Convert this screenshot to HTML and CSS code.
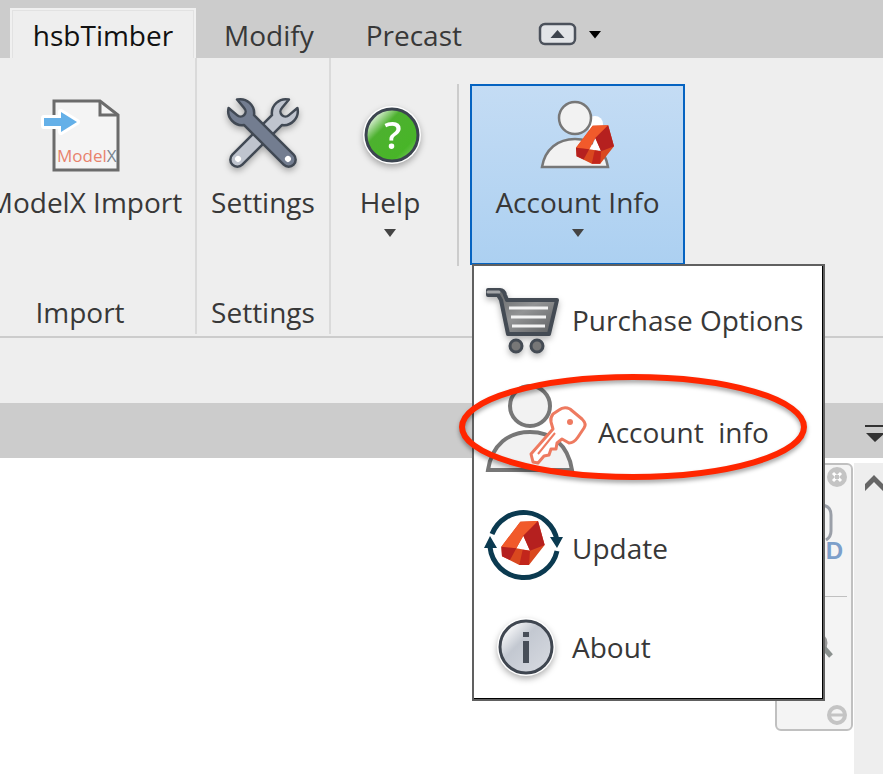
FILE: index.html
```
<!DOCTYPE html>
<html lang="en">
<head>
    <meta charset="UTF-8">
    <meta name="viewport" content="width=device-width, initial-scale=1.0">
    <title>hsbTimber</title>
    <link rel="stylesheet" href="styles.css">
</head>
<body>
    <!-- shared shapes -->
    <svg class="defs" aria-hidden="true">
        <defs>
            <linearGradient id="steel" x1="0" y1="0" x2="1" y2="1">
                <stop offset="0.1" stop-color="#ffffff"/>
                <stop offset="0.4" stop-color="#c3c8d1"/>
                <stop offset="1" stop-color="#d9dce2"/>
            </linearGradient>
            <linearGradient id="green" x1="0" y1="0" x2="1" y2="1">
                <stop offset="0.1" stop-color="#ffffff"/>
                <stop offset="0.35" stop-color="#4db12f"/>
                <stop offset="0.75" stop-color="#48b528"/>
                <stop offset="1" stop-color="#8ad276"/>
            </linearGradient>
            <linearGradient id="cart" x1="0" y1="0" x2="1" y2="1">
                <stop offset="0" stop-color="#5c5e60"/>
                <stop offset="0.5" stop-color="#939495"/>
                <stop offset="1" stop-color="#5c5e60"/>
            </linearGradient>
            <path id="wrench" d="M-6-13L-5-2A5 5 0 0 0 5-2L6-13A14 14 0 0 1 7 10L7 66A7 7 0 0 1-7 66L-7 10A14 14 0 0 1-6-13Z"/>
            <symbol id="logo" viewBox="0 0 130 132">
                <path fill="#d9481f" fill-rule="evenodd" d="M57 2L110 0L130 72L83 132H54L2 106L0 77ZM66 44L45 82L86 89Z"/>
                <path fill="#f15a2b" d="M0 77L57 2L110 0L66 44L45 82Z"/>
                <path fill="#b5201f" d="M110 0L130 72L86 89L66 44Z"/>
                <path fill="#c2261c" d="M83 132H54L64 86L86 89Z"/>
                <path fill="#b5201f" d="M0 77L45 82L26 117L2 106Z"/>
            </symbol>
        </defs>
    </svg>

    <nav class="tabs">
        <button class="tab active">hsbTimber</button>
        <button class="tab">Modify</button>
        <button class="tab">Precast</button>
        <button class="view_toggle" aria-label="Ribbon view">
            <svg width="64" height="26" viewBox="0 0 64 26">
                <rect x="2" y="4" width="35" height="20" rx="5" fill="#e2e4e7" stroke="#4b515b" stroke-width="2.5"/>
                <path d="M19.500 10L26.500 18H12.500Z" fill="#3d434d"/>
                <path d="M51 11H63L57 18.500Z" fill="#000"/>
            </svg>
        </button>
    </nav>

    <div class="ribbon">
        <section class="group import">
            <button class="tool">
                <svg width="88" height="80" viewBox="0 0 88 80">
                    <path d="M13 8H59L77 22V77H13Z" fill="#f4f4f4" stroke="#6b6b6b" stroke-width="3"/>
                    <path d="M59 8V22H77" fill="none" stroke="#6b6b6b" stroke-width="3"/>
                    <path d="M3 25h17v-6l16 10-16 10v-6H3z" fill="#64b0e8" stroke="#fff" stroke-width="6" stroke-linejoin="round" paint-order="stroke"/>
                    <text x="16" y="69" class="doc_text">Model<tspan class="doc_x">X</tspan></text>
                </svg>
                <span class="name">ModelX Import</span>
            </button>
            <div class="group_name">Import</div>
        </section>

        <section class="group settings">
            <button class="tool">
                <svg class="shadow" width="80" height="80" viewBox="0 0 80 80" stroke="#414954" stroke-width="2.500" stroke-linejoin="round">
                    <g transform="translate(61 20) rotate(45)">
                        <use href="#wrench" fill="#bfc4ce"/>
                        <circle cy="65" r="3" fill="#fff" stroke="none"/>
                    </g>
                    <g transform="translate(19 20) rotate(-45)">
                        <use href="#wrench" fill="#737d90"/>
                        <circle cy="65" r="3" fill="#fff" stroke="none"/>
                    </g>
                </svg>
                <span class="name">Settings</span>
            </button>
            <div class="group_name">Settings</div>
        </section>

        <section class="group help">
            <button class="tool">
                <svg class="shadow" width="80" height="80" viewBox="0 0 80 80">
                    <circle cx="42" cy="42" r="29" fill="#fff"/>
                    <circle cx="42" cy="42" r="26" fill="url(#green)" stroke="#3c4550" stroke-width="3"/>
                    <text x="43" y="56" class="mark">?</text>
                </svg>
                <span class="name">Help</span>
                <svg class="caret" width="12" height="8" viewBox="0 0 12 8"><path d="M0 0H12L6 8Z" fill="#444"/></svg>
            </button>
        </section>

        <div class="account">
            <button class="tool open" aria-expanded="true">
                <svg width="80" height="80" viewBox="0 0 80 80">
                    <circle cx="57" cy="31" r="8" fill="#fff"/>
                    <g fill="#f2f2f2" stroke="#777" stroke-width="2.500">
                        <circle cx="37" cy="25" r="16"/>
                        <path d="M4 74C7 56 20 46 37 46S67 56 70 74Z"/>
                    </g>
                    <path d="M58 45L64 58L52 56Z" fill="#fff"/>
                    <use href="#logo" x="38" y="32" width="38" height="39"/>
                </svg>
                <span class="name">Account Info</span>
                <svg class="caret" width="12" height="8" viewBox="0 0 12 8"><path d="M0 0H12L6 8Z" fill="#444"/></svg>
            </button>

            <div class="menu">
                <button class="item">
                    <svg class="shadow" width="80" height="92" viewBox="0 0 80 92">
                        <path d="M4 16H16Q20 16 21 21L23 26H73L65 60H24L17 26L14 21H4Z" fill="url(#cart)" stroke="#444b54" stroke-width="4" stroke-linejoin="round"/>
                        <path d="M4 18H15" stroke="#a3a5a8" stroke-width="3" stroke-linecap="round"/>
                        <path d="M25 34H64M27 43H62M28 52H61" stroke="#f3f3f3" stroke-width="3"/>
                        <circle cx="32" cy="72" r="6" fill="#777" stroke="#444b54" stroke-width="3"/>
                        <circle cx="53" cy="72" r="6" fill="#777" stroke="#444b54" stroke-width="3"/>
                    </svg>
                    <span>Purchase Options</span>
                </button>
                <button class="item">
                    <svg width="106" height="100" viewBox="0 0 106 100">
                        <g fill="#f2f2f2" stroke="#777" stroke-width="4">
                            <circle cx="46" cy="24" r="20"/>
                            <path d="M4 88C8 62 25 50 46 50S84 62 88 88Z"/>
                        </g>
                        <path d="M69 47L67 40Q66 36 69 32L75 28Q80 24 86 27L98 37Q103 42 100 46L94 55Q90 61 85 61L78 57L73 61L72 67L67 67L65 73L60 74L54 81L49 80L47 72Z" fill="#fff" stroke="#ee7a60" stroke-width="3" stroke-linejoin="round"/>
                        <circle cx="86" cy="40" r="3" fill="#ee7a60"/>
                        <path d="M71 51L54 72" stroke="#ee7a60" stroke-width="2"/>
                    </svg>
                    <span class="spaced">Account  info</span>
                    <svg class="ring" width="356" height="116" viewBox="0 0 356 116">
                        <ellipse cx="178" cy="56" rx="171" ry="50" fill="none" stroke="#ff2600" stroke-width="6"/>
                    </svg>
                </button>
                <button class="item">
                    <svg width="80" height="99" viewBox="0 0 80 99">
                        <g fill="none" stroke="#0b3a50" stroke-width="5">
                            <path d="M8 36A34 34 0 0 1 73 42"/>
                            <path d="M73 53A34 34 0 0 1 6 49"/>
                        </g>
                        <path d="M66 39H79L73 50ZM0 50H13L6 38Z" fill="#0b3a50"/>
                        <use href="#logo" x="17" y="23" width="44" height="44"/>
                    </svg>
                    <span>Update</span>
                </button>
                <button class="item">
                    <svg class="shadow" width="80" height="68" viewBox="0 0 80 68">
                        <circle cx="42" cy="34" r="29" fill="#fff"/>
                        <circle cx="42" cy="34" r="26" fill="url(#steel)" stroke="#3f4650" stroke-width="3"/>
                        <path d="M39 19h6v5h-6zM39 28h6v22h-6z" fill="#474e58"/>
                    </svg>
                    <span>About</span>
                </button>
            </div>
        </div>
    </div>

    <div class="options_bar"></div>
    <div class="view_bar">
        <button aria-label="View list">
            <svg width="18" height="24" viewBox="0 0 18 24"><path d="M0 6H18V8H0ZM1 14H20L10 23Z" fill="#333"/></svg>
        </button>
    </div>

    <main class="canvas">
        <div class="navbar">
            <svg class="round" width="20" height="20" viewBox="0 0 20 20">
                <circle cx="10" cy="10" r="10" fill="#c4c4c4"/>
                <path d="M6 6L14 14M14 6L6 14" stroke="#fff" stroke-width="3"/>
                <rect x="8" y="8" width="4" height="4" fill="#c4c4c4"/>
            </svg>
            <div class="wheel">
                <svg width="20" height="38" viewBox="0 0 20 38"><path d="M1 2Q10 3 10 12V28Q10 34 5 37" fill="none" stroke="#9a9fa8" stroke-width="3"/></svg>
                <b>2D</b>
            </div>
            <svg class="lens" width="30" height="30" viewBox="0 0 30 30">
                <circle cx="8" cy="12" r="9" fill="#e9f1f1" stroke="#999" stroke-width="3"/>
                <path d="M15 17L22 25" stroke="#8a908e" stroke-width="5"/>
            </svg>
            <svg class="round" width="20" height="20" viewBox="0 0 20 20">
                <circle cx="10" cy="10" r="8" fill="#f4f4f4" stroke="#c4c4c4" stroke-width="4"/>
                <path d="M4 10H16" stroke="#c4c4c4" stroke-width="3"/>
            </svg>
        </div>
        <div class="scrollbar">
            <svg width="18" height="17" viewBox="0 0 18 17"><path d="M0 9L9 0L18 9V16L9 7L0 16Z" fill="#666"/></svg>
        </div>
    </main>
</body>
</html>
```
FILE: styles.css
```
*{
    box-sizing: border-box;
}
body{
    margin: 0;
    min-height: 100vh;
    display: flex;
    flex-direction: column;
    overflow: hidden;
    background-color: #eee;
    color: #383838;
    font-family: "Open Sans", "Noto Sans", sans-serif;
    font-size: 28px;
    line-height: 40px;
}
button{
    border: 0;
    padding: 0;
    background: none;
    color: inherit;
    font: inherit;
}
svg{
    display: block;
    flex: none;
}
.defs{
    position: absolute;
    width: 0;
    height: 0;
}
.shadow{
    filter: drop-shadow(0 3px 3px rgba(0, 0, 0, 0.3));
}

/* tabs */
.tabs{
    display: flex;
    height: 58px;
    padding: 8px 0 0 10px;
    background-color: #ccc;
}
.tab{
    height: 50px;
    padding: 4px 24px 0 28px;
}
.tab.active{
    width: 186px;
    padding: 2px 0 0;
    border: 2px solid #f0f0f0;
    border-bottom: 0;
    background-color: #eee;
    box-shadow: inset 1px 1px #e2e2e2, inset -1px 0 #e2e2e2;
    color: #111;
}
.view_toggle{
    margin-left: 52px;
}

/* ribbon */
.ribbon{
    display: flex;
    height: 280px;
    border-bottom: 2px solid #ccc;
}
.group{
    display: flex;
    flex-direction: column;
    justify-content: space-between;
    align-items: center;
    height: 276px;
    padding-top: 35px;
    padding-bottom: 2px;
    border-right: 2px solid #dadada;
}
/* the panel runs out past the left edge of the window */
.import{
    width: 232px;
    margin-left: -35px;
}
.import .tool{
    padding-left: 10px;
}
.settings{
    width: 134px;
}
.help{
    width: 128px;
    height: 208px;
    padding-right: 8px;
    border-color: #ccc;
    border-image: linear-gradient(transparent 27px, #ccc 27px) 1;
}
.tool{
    display: flex;
    flex-direction: column;
    align-items: center;
    white-space: nowrap;
}
.name{
    margin-top: 9px;
}
.caret{
    margin-top: 7px;
}
.doc_text{
    font-size: 17px;
    fill: #e8826c;
}
.doc_x{
    fill: #7a8590;
}
.mark{
    font-size: 38px;
    font-weight: 600;
    text-anchor: middle;
    fill: #fff;
}

/* account button and its menu */
.account{
    position: relative;
    margin: 26px 0 0 11px;
    height: 181px;
}
.open{
    width: 215px;
    height: 181px;
    padding-top: 7px;
    justify-content: flex-start;
    border: 2px solid #0563c1;
    background: linear-gradient(#c4dcf4, #acd0f1);
}
.menu{
    position: absolute;
    z-index: 2;
    top: 180px;
    left: 2px;
    width: 353px;
    padding-bottom: 10px;
    border: 2px solid #606060;
    box-shadow: inset -1px -1px #000;
    background-color: #fff;
}
.item{
    position: relative;
    display: flex;
    align-items: center;
    width: 100%;
    padding: 8px 0 8px 10px;
    gap: 8px;
    white-space: nowrap;
}
.spaced{
    white-space: pre;
}
/* red marker round the item */
.ring{
    position: absolute;
    top: -3px;
    left: -19px;
    filter: drop-shadow(0 3px 2px rgba(0, 0, 0, 0.35));
}

/* below the ribbon */
.options_bar{
    height: 65px;
}
.view_bar{
    display: flex;
    justify-content: flex-end;
    align-items: center;
    height: 55px;
    background-color: #ccc;
}
.canvas{
    display: flex;
    flex: 1;
    justify-content: flex-end;
    padding-top: 5px;
    background-color: #fff;
}
.navbar{
    display: flex;
    flex-direction: column;
    align-items: flex-end;
    width: 78px;
    height: 268px;
    margin-right: 1px;
    padding: 2px 4px 4px;
    border: 2px solid #c0c0c0;
    border-radius: 6px;
    background-color: #f4f4f4;
}
.wheel{
    display: flex;
    flex-direction: column;
    align-items: flex-end;
    width: 100%;
    height: 110px;
    padding-top: 16px;
    border-bottom: 1px solid #c0c0c0;
}
.wheel svg{
    margin-right: 6px;
}
.wheel b{
    margin-right: 4px;
    color: #7c9fca;
    font-family: "Liberation Sans", sans-serif;
    font-size: 24px;
    line-height: 20px;
}
.lens{
    margin: 34px 8px auto 0;
}
.scrollbar{
    display: flex;
    justify-content: flex-end;
    width: 29px;
    padding-top: 12px;
    background-color: #eee;
}
```
